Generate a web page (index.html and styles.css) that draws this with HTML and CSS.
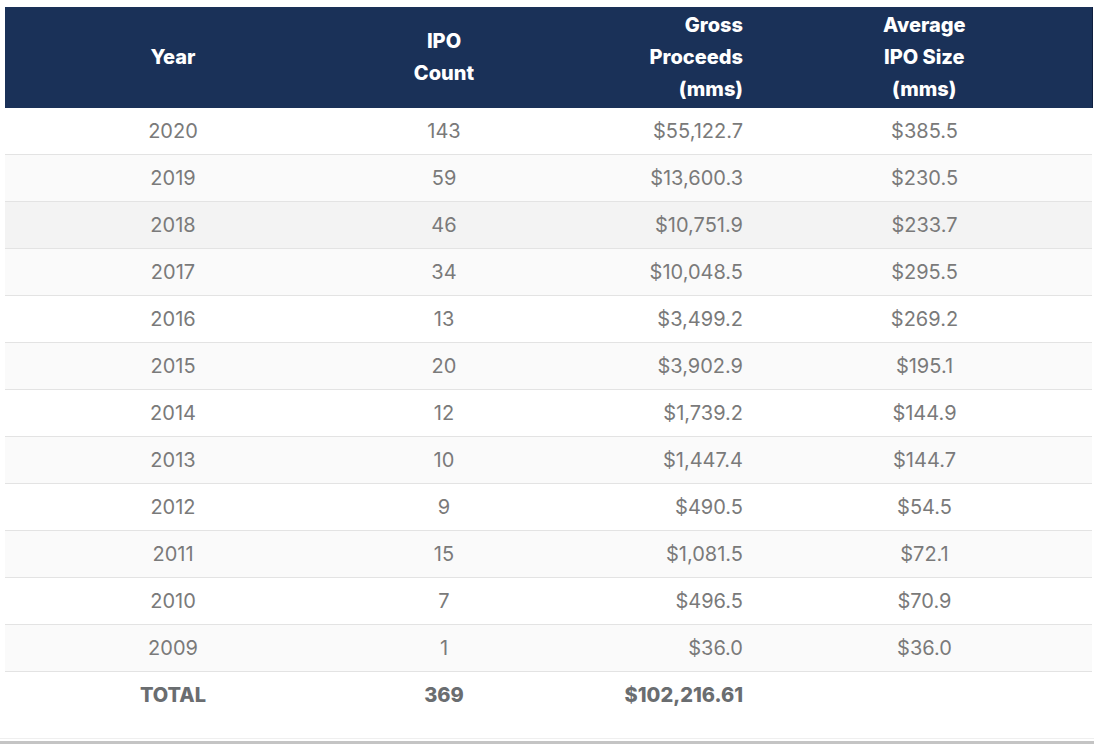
FILE: index.html
```html
<!DOCTYPE html>
<html lang="en">
<head>
<meta charset="utf-8">
<title>IPO Table</title>
<link rel="stylesheet" href="styles.css">
</head>
<body>
<div class="page">
  <table class="ipo">
    <colgroup>
      <col class="c-year">
      <col class="c-count">
      <col class="c-gross">
      <col class="c-avg">
    </colgroup>
    <thead>
      <tr>
        <th class="center">Year</th>
        <th class="center">IPO<br>Count</th>
        <th class="right">Gross<br>Proceeds<br>(mms)</th>
        <th class="center">Average<br>IPO Size<br>(mms)</th>
      </tr>
    </thead>
    <tbody>
      <tr><td class="center">2020</td><td class="center">143</td><td class="right">$55,122.7</td><td class="center">$385.5</td></tr>
      <tr><td class="center">2019</td><td class="center">59</td><td class="right">$13,600.3</td><td class="center">$230.5</td></tr>
      <tr class="hover"><td class="center">2018</td><td class="center">46</td><td class="right">$10,751.9</td><td class="center">$233.7</td></tr>
      <tr><td class="center">2017</td><td class="center">34</td><td class="right">$10,048.5</td><td class="center">$295.5</td></tr>
      <tr><td class="center">2016</td><td class="center">13</td><td class="right">$3,499.2</td><td class="center">$269.2</td></tr>
      <tr><td class="center">2015</td><td class="center">20</td><td class="right">$3,902.9</td><td class="center">$195.1</td></tr>
      <tr><td class="center">2014</td><td class="center">12</td><td class="right">$1,739.2</td><td class="center">$144.9</td></tr>
      <tr><td class="center">2013</td><td class="center">10</td><td class="right">$1,447.4</td><td class="center">$144.7</td></tr>
      <tr><td class="center">2012</td><td class="center">9</td><td class="right">$490.5</td><td class="center">$54.5</td></tr>
      <tr><td class="center">2011</td><td class="center">15</td><td class="right">$1,081.5</td><td class="center">$72.1</td></tr>
      <tr><td class="center">2010</td><td class="center">7</td><td class="right">$496.5</td><td class="center">$70.9</td></tr>
      <tr><td class="center">2009</td><td class="center">1</td><td class="right">$36.0</td><td class="center">$36.0</td></tr>
      <tr class="total"><td class="center">TOTAL</td><td class="center">369</td><td class="right">$102,216.61</td><td class="center"></td></tr>
    </tbody>
  </table>
  <div class="foot"></div>
</div>
</body>
</html>
```

FILE: styles.css
```css
html, body {
  margin: 0;
  padding: 0;
  background: #ffffff;
}

body {
  font-family: Inter, "Open Sans", "Liberation Sans", sans-serif;
  width: 1094px;
  height: 745px;
  overflow: hidden;
}

.page {
  padding: 7px 2px 0 5px;
}

.ipo {
  width: 1087px;
  border-collapse: collapse;
  table-layout: fixed;
}

.c-year { width: 336px; }
.c-count { width: 206px; }
.c-gross { width: 210px; }
.c-avg { width: 335px; }

.ipo th {
  background: #1a3158;
  color: #ffffff;
  font-weight: 800;
  font-size: 20px;
  line-height: 32px;
  padding: 2px 14px 3px;
  height: 96px;
  vertical-align: middle;
}

.ipo th:last-child {
  border-right: 1px solid #0f2040;
}

.ipo td {
  color: #7a7a7a;
  font-size: 20px;
  line-height: 45px;
  height: 45px;
  padding: 1px 14px 0;
  border-bottom: 1px solid #e3e3e3;
  vertical-align: middle;
}

.center { text-align: center; }
.right { text-align: right; }

.ipo tbody tr:nth-child(even) td {
  background: #fafafa;
}

.ipo tbody tr.hover td {
  background: #f3f3f3;
}

.ipo tbody tr.total td {
  background: #ffffff;
  border-bottom: none;
  color: #6a6d70;
  font-weight: 800;
}

.foot {
  margin-top: 20px;
  height: 2px;
  border-top: 1px solid #efefef;
  border-bottom: 3px solid #c4c4c4;
  margin-left: -5px;
  margin-right: -2px;
}
```
